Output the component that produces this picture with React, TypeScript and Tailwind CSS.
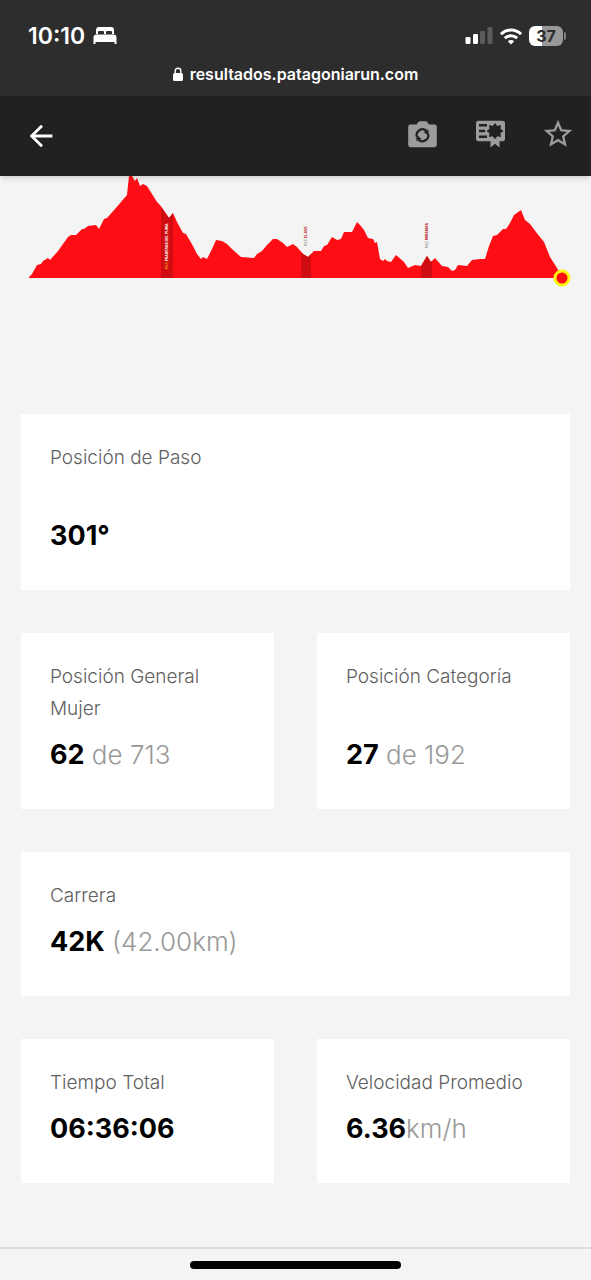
import type { ReactNode } from 'react';
import { MdArrowBack, MdStarBorder } from 'react-icons/md';

const PROFILE =
  '29,277 32,274 37,265 41,264 43,261 48,258 50,260 58,251 63,244 68,237 71,235 76,235 82,229 84,229 88,226 96,225 99,229 104,219 107,218 115,209 127,195 129,176 132,176 135,181 137,178 140,186 143,184 147,186 157,202 160,205 169,218 173,213 177,222 183,233 186,234 193,246 197,254 201,259 203,257 207,259 212,249 216,240 222,241 227,244 233,250 241,257 254,258 257,254 262,251 267,245 273,239 277,239 283,243 287,247 293,244 297,247 303,254 308,257 314,251 321,251 324,246 327,245 332,237 337,240 341,239 344,232 352,232 357,222 360,225 364,230 368,238 373,239 375,243 377,242 380,259 383,261 385,259 387,261 391,262 396,255 404,262 408,268 415,265 421,266 427,256 431,262 435,258 442,266 448,267 452,271 455,270 458,265 467,266 472,260 480,259 485,259 489,246 493,236 497,235 503,229 506,229 510,223 514,215 521,210 525,220 530,224 536,232 544,242 550,257 557,268 562,278 29,278';

// Checkpoints along the route: x is the label baseline, y its lower end
const CHECKPOINTS = [
  { name: 'PRADERAS DEL PUMA', x: 168, y: 269, band: 161, width: 12, prefix: '#ffb020', fill: '#ffffff' },
  { name: 'EL AVE', x: 307, y: 246, band: 301, width: 10, prefix: '#888888', fill: '#b8121c' },
  { name: 'MIRAMAS', x: 428, y: 248, band: 421, width: 11, prefix: '#888888', fill: '#b8121c' },
];

function BedIcon() {
  return (
    <svg width="24" height="18" viewBox="0 0 24 18" fill="currentColor" aria-hidden="true">
      <path d="M3 7V3q0-3 3-3h12q3 0 3 3v4h-2V5q0-1-1-1h-4q-1 0-1 1v2h-2V5q0-1-1-1H6q-1 0-1 1v2z" />
      <path d="M3.500 7.500h17q3 0 3 3V17h-2v-2h-19v2h-2v-6.500q0-3 3-3z" />
    </svg>
  );
}

function SignalIcon() {
  return (
    <svg width="28" height="18" viewBox="0 0 28 18" fill="currentColor" aria-hidden="true">
      <rect x="0.500" y="10" width="5" height="7" rx="1.200" />
      <rect x="8" y="7" width="5" height="10" rx="1.200" />
      <rect x="15" y="4" width="5" height="13" rx="1.200" opacity=".22" />
      <rect x="22.500" y="0" width="5" height="17" rx="1.200" opacity=".22" />
    </svg>
  );
}

function WifiIcon() {
  return (
    <svg width="22" height="17" viewBox="0 0 22 17" fill="none" stroke="currentColor" strokeWidth="3" aria-hidden="true">
      <path d="M1 6.200C6.500 .6 15.500 .6 21 6.200" />
      <path d="M4.800 10.200c3.600-3.400 8.800-3.400 12.400 0" />
      <path d="M7.800 13.200c1.900-1.600 4.500-1.600 6.400 0L11 16.500z" fill="currentColor" stroke="none" />
    </svg>
  );
}

function LockIcon() {
  return (
    <svg width="10" height="14" viewBox="0 0 10 14" aria-hidden="true">
      <rect y="6" width="10" height="8" rx="1.500" fill="currentColor" />
      <path d="M2.200 6.500V4a2.800 2.800 0 0 1 5.600 0v2.500" fill="none" stroke="currentColor" strokeWidth="1.400" />
    </svg>
  );
}

function CameraIcon() {
  return (
    <svg width="29" height="27" viewBox="0 0 29 27" aria-hidden="true">
      <path d="M2.500 3.500h6L10.500.8Q11 .3 12 .3h5.500q1 0 1.500.5l2 2.700h5.500q2.300 0 2.300 2.300v18q0 2.400-2.300 2.400h-24Q.2 26.200.2 23.800v-18Q.2 3.500 2.500 3.500z" fill="currentColor" />
      <g fill="none" stroke="#212121" strokeWidth="2.200">
        <path d="M8.700 15.500a6 6 0 0 1 9.500-6" />
        <path d="M20.200 13a6 6 0 0 1-9.500 6" />
      </g>
      <path d="M15 11.200l5.500-3v6zM13.900 17.300l-5.500 3v-6z" fill="#212121" />
      <circle cx="14.450" cy="14.250" r="3.300" fill="currentColor" />
    </svg>
  );
}

function CertificateIcon() {
  return (
    <svg width="30" height="28" viewBox="0 0 30 28" aria-hidden="true">
      <path d="M2.500.7h24q2.500 0 2.500 2.500v15.500q0 2.500-2.500 2.500H2.500Q0 21.200 0 18.700V3.200Q0 .7 2.500.7z" fill="currentColor" />
      <path d="M3 4h8v2.500H3zM3 9.700h6v2.500H3zM3 15.500h8V18H3z" fill="#212121" />
      <path d="M19 3l2.300 3 3.700-1-.5 3.800L27.500 11l-3 2.300.5 3.700-3.700-.6L19 19.500l-2.300-3.100-3.700.6.5-3.700-3-2.300 3-2.200L13 5l3.700 1z" fill="#212121" />
      <path d="M14.500 17l2.200-.6L19 19.500l2.300-3.100 2.200.6v10.500L19 23.700l-4.500 3.800z" fill="currentColor" />
    </svg>
  );
}

function StatusBar() {
  return (
    <div className="h-24 bg-[#2d2d2d] text-white">
      <div className="flex h-16 items-center justify-between pt-2 pr-[25px] pl-7">
        <div className="flex items-center gap-2">
          <span className="text-[23px] leading-7 font-semibold">10:10</span>
          <BedIcon />
        </div>
        <div className="flex items-center gap-[7px]">
          <SignalIcon />
          <WifiIcon />
          <div className="flex items-center gap-px">
            <span className="flex h-5 w-[34px] items-center justify-center rounded-md bg-linear-to-r from-white from-37% to-[#989898] to-37% text-base leading-5 font-bold text-[#2d2d2d]">
              37
            </span>
            <span className="h-2 w-0.5 rounded-r-full bg-[#808080]" />
          </div>
        </div>
      </div>
      <div className="flex h-5 items-center justify-center gap-[7px]">
        <LockIcon />
        <span className="text-base leading-5 font-semibold">resultados.patagoniarun.com</span>
      </div>
    </div>
  );
}

function Toolbar() {
  return (
    <header className="relative flex h-20 items-center justify-between bg-[#212121] pr-4 pl-6 shadow-md">
      <button type="button" aria-label="Volver" className="text-white">
        <MdArrowBack size={34} />
      </button>
      <div className="flex items-center gap-[35px] pb-1 text-[#9c9c9c]">
        <button type="button" aria-label="Fotos">
          <CameraIcon />
        </button>
        <button type="button" aria-label="Certificado" className="ml-1">
          <CertificateIcon />
        </button>
        <button type="button" aria-label="Favorito">
          <MdStarBorder size={34} />
        </button>
      </div>
    </header>
  );
}

function ElevationProfile() {
  return (
    <svg viewBox="0 176 591 112" className="block w-full" role="img" aria-label="Perfil de altimetría">
      <clipPath id="profile">
        <polygon points={PROFILE} />
      </clipPath>
      <polygon points={PROFILE} fill="#ff0d14" />
      {CHECKPOINTS.map((point) => (
        <g key={point.name}>
          <rect x={point.band} y="176" width={point.width} height="102" fill="#cf0c12" clipPath="url(#profile)" />
          <text
            transform={`translate(${point.x} ${point.y}) rotate(-90)`}
            fontSize="3.5"
            fontWeight="700"
            fill={point.fill}
          >
            <tspan fill={point.prefix} fontWeight="500">PAS </tspan>
            {point.name}
          </text>
        </g>
      ))}
      <circle cx="562" cy="278" r="7" fill="#ff0d14" stroke="#fff70a" strokeWidth="3" />
    </svg>
  );
}

interface StatCardProps {
  label: string;
  value: string;
  children?: ReactNode;
  wide?: boolean;
  tall?: boolean;
}

function StatCard({ label, value, children, wide, tall }: StatCardProps) {
  return (
    <section className={`bg-white px-[29px] pt-7 pb-[30px] ${wide ? 'col-span-2' : ''}`}>
      <h2 className={`text-[19px] leading-8 font-light text-[#606060] ${tall ? 'min-h-16' : ''}`}>{label}</h2>
      <p className="mt-1.5 text-[26px] leading-12 font-light text-[#999999]">
        <strong className="text-[27px] font-bold text-black">{value}</strong>
        {children}
      </p>
    </section>
  );
}

export default function App() {
  return (
    <div className="flex min-h-screen flex-col bg-[#f4f4f4] font-['Inter',sans-serif]">
      <StatusBar />
      <Toolbar />
      <ElevationProfile />
      <main className="mt-[126px] grid grid-cols-2 gap-[43px] px-[21px]">
        <StatCard label="Posición de Paso" value="301°" wide tall />
        <StatCard label="Posición General Mujer" value="62" tall> de 713</StatCard>
        <StatCard label="Posición Categoría" value="27" tall> de 192</StatCard>
        <StatCard label="Carrera" value="42K" wide> (42.00km)</StatCard>
        <StatCard label="Tiempo Total" value="06:36:06" />
        <StatCard label="Velocidad Promedio" value="6.36">km/h</StatCard>
      </main>
      <footer className="mt-auto flex h-[33px] justify-center border-t-2 border-[#dedede] pt-3">
        <div className="h-2 w-[211px] rounded-full bg-black" />
      </footer>
    </div>
  );
}
